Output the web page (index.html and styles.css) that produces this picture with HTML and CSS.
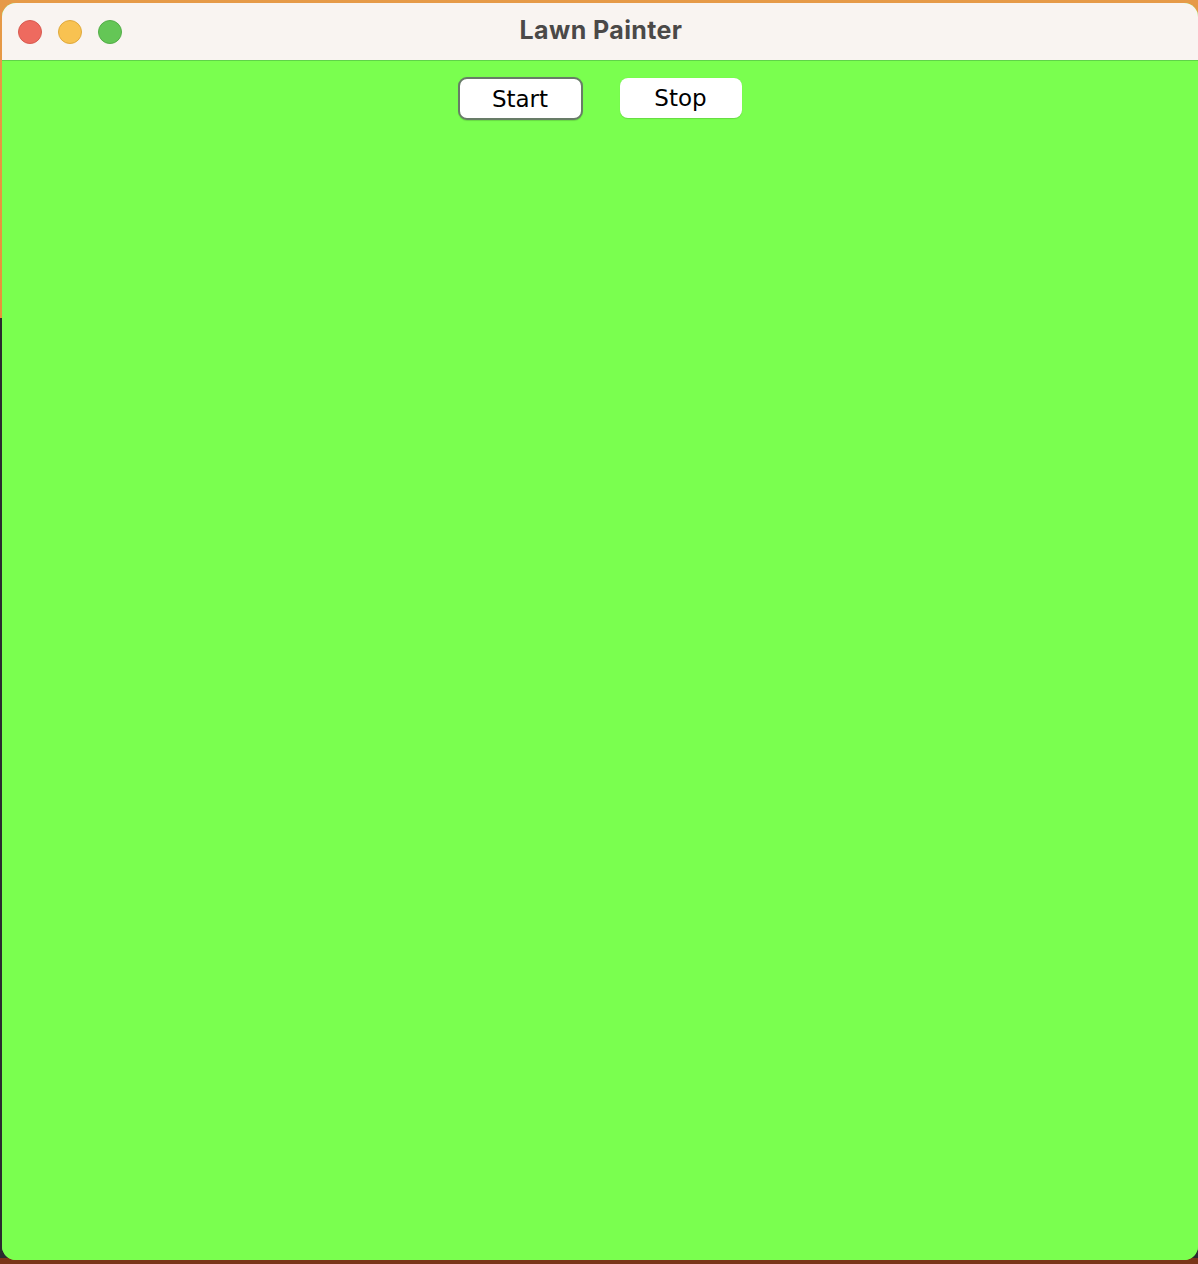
FILE: index.html
```html
<!DOCTYPE html>
<html>
<head>
<meta charset="utf-8">
<title>Lawn Painter</title>
<link rel="stylesheet" href="styles.css">
</head>
<body>
<div class="desktop">
  <div class="window">
    <div class="titlebar">
      <div class="lights">
        <span class="light red"></span>
        <span class="light yellow"></span>
        <span class="light green"></span>
      </div>
      <div class="title">Lawn Painter</div>
    </div>
    <div class="content">
      <div class="toolbar">
        <button class="btn focused">Start</button>
        <button class="btn">Stop</button>
      </div>
    </div>
  </div>
</div>
</body>
</html>
```
FILE: styles.css
```css
html, body {
  margin: 0;
  padding: 0;
}
body {
  width: 1198px;
  height: 1264px;
  overflow: hidden;
}
.desktop {
  width: 1198px;
  height: 1264px;
  box-sizing: border-box;
  padding: 3px 0 4px 2px;
  background:
    linear-gradient(to bottom, transparent 1258px, #7a3518 1258px),
    linear-gradient(to bottom, #e69a48 0, #e8923a 318px, #2a2b2e 318px);
}
.window {
  height: 1257px;
  display: flex;
  flex-direction: column;
  border-radius: 14px;
  overflow: hidden;
  background: #7aff4f;
}
.titlebar {
  height: 57px;
  flex: none;
  background: #f9f4f1;
  border-bottom: 1px solid #5fd448;
  position: relative;
  display: flex;
  align-items: center;
  justify-content: center;
}
.lights {
  position: absolute;
  left: 16px;
  top: 17px;
  display: flex;
  gap: 16px;
}
.light {
  width: 24px;
  height: 24px;
  border-radius: 50%;
  box-sizing: border-box;
}
.red { background: #ee6a5f; border: 1px solid #d85a50; }
.yellow { background: #f8c251; border: 1px solid #e0a93c; }
.green { background: #64c656; border: 1px solid #54ad48; }
.title {
  font-family: "Inter", "Liberation Sans", sans-serif;
  font-weight: 700;
  font-size: 25px;
  letter-spacing: 0.4px;
  color: #4b4948;
  margin-left: 2px;
  margin-bottom: 3px;
}
.content {
  flex: 1;
  background: #7aff4f;
}
.toolbar {
  display: flex;
  justify-content: center;
  gap: 37px;
  padding-top: 16px;
  padding-right: 1px;
}
.btn {
  width: 122px;
  height: 40px;
  margin-top: 1px;
  background: #ffffff;
  border: none;
  border-radius: 8px;
  font-family: "DejaVu Sans", "Liberation Sans", sans-serif;
  font-size: 23px;
  color: #000;
  padding: 0;
  box-shadow: 0 0.5px 1px rgba(0,0,0,0.15);
}
.btn.focused {
  width: 125px;
  height: 43px;
  margin-top: 0;
  border: 2px solid #687c68;
  border-radius: 9px;
}
```
